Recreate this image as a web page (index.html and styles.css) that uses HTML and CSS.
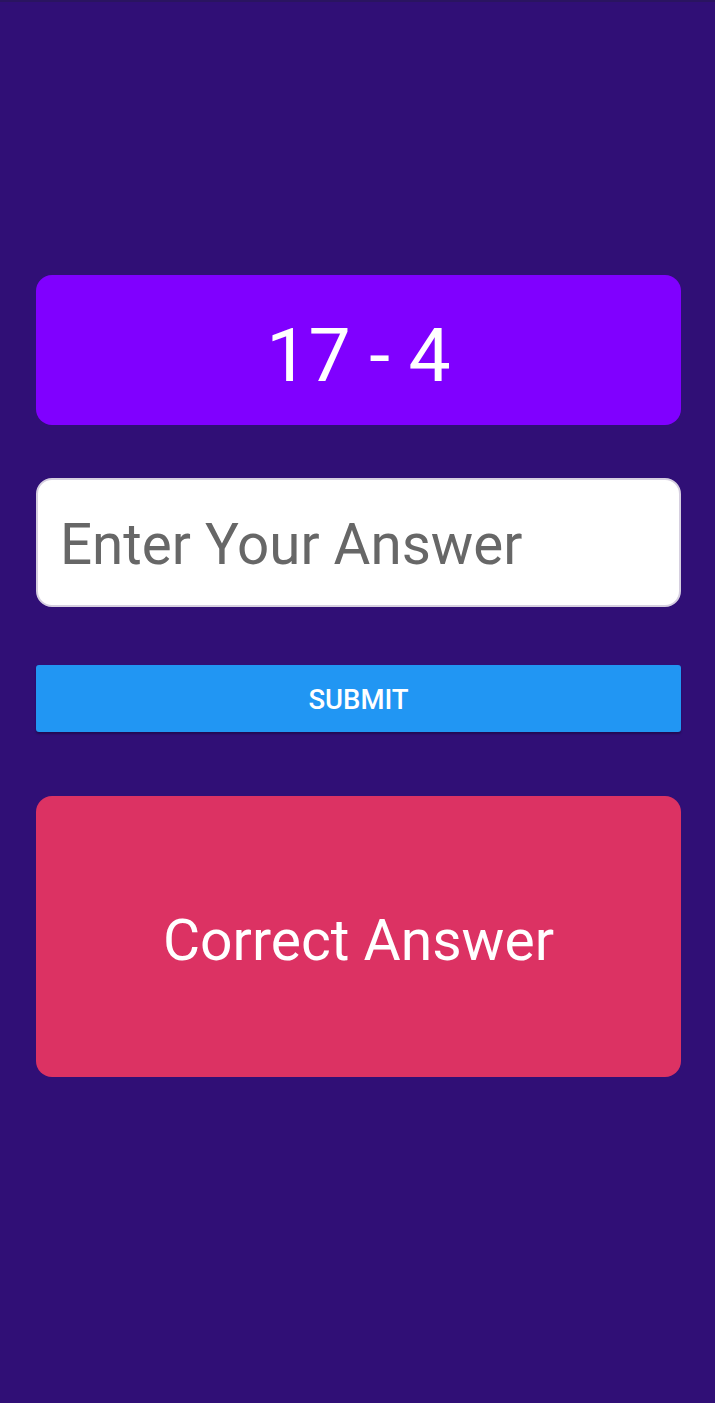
FILE: index.html
```html
<!DOCTYPE html>
<html>
<head>
<meta charset="utf-8">
<link rel="stylesheet" href="styles.css">
</head>
<body>
<div class="topbar"></div>
<main class="app">
  <div class="question">17 - 4</div>
  <div class="answer-field"><span class="placeholder">Enter Your Answer</span></div>
  <button class="submit">SUBMIT</button>
  <div class="result">Correct Answer</div>
</main>
</body>
</html>
```

FILE: styles.css
```css
html, body {
  margin: 0;
  padding: 0;
  height: 100%;
}
body {
  background: #300f76;
  font-family: Roboto, "Noto Sans", sans-serif;
}
.topbar {
  height: 2px;
  background: #2a1460;
}
.app {
  padding: 273px 34px 0 36px;
  display: flex;
  flex-direction: column;
}
.question {
  height: 150px;
  box-sizing: border-box;
  padding-top: 10px;
  background: #8000ff;
  border-radius: 16px;
  color: #fff;
  font-size: 75px;
  display: flex;
  align-items: center;
  justify-content: center;
  line-height: 1;
}
.answer-field {
  margin-top: 53px;
  height: 129px;
  box-sizing: border-box;
  padding-top: 4px;
  background: #fff;
  border: 2px solid #d6cfe0;
  border-radius: 16px;
  display: flex;
  align-items: center;
  padding-left: 22px;
}
.placeholder {
  color: #676767;
  font-size: 56.5px;
}
.submit {
  margin-top: 58px;
  height: 67px;
  background: #2196f3;
  border: none;
  border-radius: 3px;
  color: #fff;
  font-family: Roboto, sans-serif;
  font-weight: 500;
  font-size: 27.5px;
  padding-top: 2px;
  box-shadow: 0 2px 2px rgba(0,0,0,0.3);
}
.result {
  margin-top: 64px;
  height: 281px;
  box-sizing: border-box;
  padding-top: 8px;
  background: #dc3263;
  border-radius: 16px;
  color: #fff;
  font-size: 57px;
  display: flex;
  align-items: center;
  justify-content: center;
}
```
